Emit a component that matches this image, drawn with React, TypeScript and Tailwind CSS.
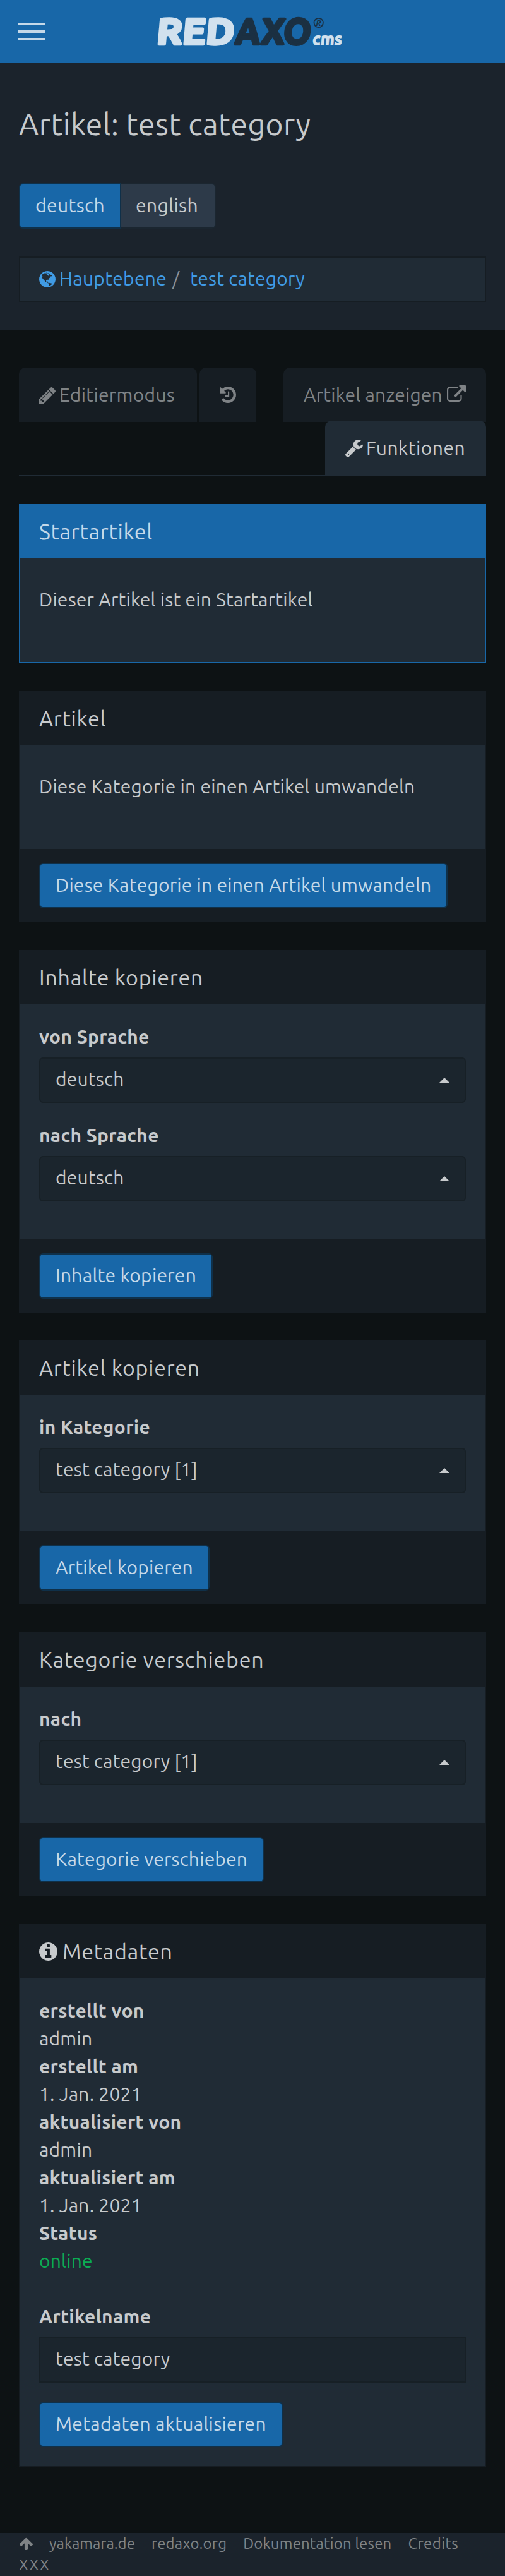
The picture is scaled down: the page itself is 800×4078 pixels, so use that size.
import React from "react";

function Icon({ d, box, className }: { d: string; box: string; className: string }) {
  return (
    <svg viewBox={box} className={className} fill="currentColor" preserveAspectRatio="none">
      <path d={d} />
    </svg>
  );
}

const GLOBE =
  "M896 128q209 0 385.5 103t279.5 279.5 103 385.5-103 385.5-279.5 279.5-385.5 103-385.5-103-279.5-279.5-103-385.5 103-385.5 279.5-279.5 385.5-103zm274 521q-2 1-9.5 9.5t-13.5 9.5q2 0 4.5-5t5-11 3.5-7q6-7 22-15 14-6 52-12 34-8 51 11-2-2 9.5-13t14.5-12q3-2 15-4.5t15-7.5l2-22q-12 1-17.5-7t-6.5-21q0 2-6 8 0-7-4.5-8t-11.5 1-9 1q-10-3-15-7.5t-8-16.5-4-15q-2-5-9.5-11t-9.5-10q-1-2-2.5-5.5t-3-6.5-4-5.5-5.5-2.5-7 5-7.5 10-4.5 5q-3-2-6-1.5t-4.5 1-4.5 3-5 3.5q-3 2-8.5 3t-8.5 2q15-5-1-11-10-4-16-3 9-4 7.5-12t-8.5-14h5q-1-4-8.5-8.5t-17.5-8.5-13-6q-8-5-34-9.5t-33-.5q-5 6-4.5 10.5t4 14 3.5 12.5q1 6-5.5 13t-6.5 12q0 7 14 15.5t10 21.5q-3 8-16 16t-16 12q-5 8-1.5 18.5t10.5 16.5q2 2 1.5 4t-3.5 4.5-5.5 4-6.5 3.5l-3 2q-11 5-20.5-6t-13.5-26q-7-25-16-30-23-8-29 1-5-13-41-26-25-9-58-4 6-1 0-15-7-15-19-12 3-6 4-17.5t1-13.5q3-13 12-23 1-1 7-8.5t9.5-13.5.5-6q35 4 50-11 5-5 11.5-17t10.5-17q9-6 14-5.5t14.5 5.5 14.5 5q14 1 15.5-11t-7.5-20q12 1 3-17-4-7-8-9-12-4-27 5-8 4 2 8-1-1-9.5 10.5t-16.5 17.5-16-5q-1-1-5.5-13.5t-9.5-13.5q-8 0-16 15 3-8-11-15t-24-8q19-12-8-27-7-4-20.5-5t-19.5 4q-5 7-5.5 11.5t5 8 10.5 5.5 11.5 4 8.5 3q14 10 8 14-2 1-8.5 3.5t-11.5 4.5-6 4q-3 4 0 14t-2 14q-5-5-9-17.5t-7-16.5q7 9-25 6l-10-1q-4 0-16 2t-20.5 1-13.5-8q-4-8 0-20 1-4 4-2-4-3-11-9.5t-10-8.5q-46 15-94 41 6 1 12-1 5-2 13-6.5t10-5.5q34-14 42-7l5-5q14 16 20 25-7-4-30-1-20 6-22 12 7 12 5 18-4-3-11.5-10t-14.5-11-15-5q-16 0-22 1-146 80-235 222 7 7 12 8 4 1 5 9t2.5 11 11.5-3q9 8 3 19 1-1 44 27 19 17 21 21 3 11-10 18-1-2-9-9t-9-4q-3 5 .5 18.5t10.5 12.5q-7 0-9.5 16t-2.5 35.5-1 23.5l2 1q-3 12 5.5 34.5t21.5 19.5q-13 3 20 43 6 8 8 9 3 2 12 7.5t15 10 10 10.5q4 5 10 22.5t14 23.5q-2 6 9.5 20t10.5 23q-1 0-2.5 1t-2.5 1q3 7 15.5 14t15.5 13q1 3 2 10t3 11 8 2q2-20-24-62-15-25-17-29-3-5-5.5-15.5t-4.5-14.5q2 0 6 1.5t8.5 3.5 7.5 4 2 3q-3 7 2 17.5t12 18.5 17 19 12 13q6 6 14 19.5t0 13.5q9 0 20 10.5t17 19.5q5 8 8 26t5 24q2 7 8.5 13.5t12.5 9.5l16 8 13 7q5 2 18.5 10.5t21.5 11.5q10 4 16 4t14.5-2.5 13.5-3.5q15-2 29 15t21 21q36 19 55 11-2 1 .5 7.5t8 15.5 9 14.5 5.5 8.5q5 6 18 15t18 15q6-4 7-9-3 8 7 20t18 10q14-3 14-32-31 15-49-18 0-1-2.5-5.5t-4-8.5-2.5-8.5 0-7.5 5-3q9 0 10-3.5t-2-12.5-4-13q-1-8-11-20t-12-15q-5 9-16 8t-16-9q0 1-1.5 5.5t-1.5 6.5q-13 0-15-1 1-3 2.5-17.5t3.5-22.5q1-4 5.5-12t7.5-14.5 4-12.5-4.5-9.5-17.5-2.5q-19 1-26 20-1 3-3 10.5t-5 11.5-9 7q-7 3-24 2t-24-5q-13-8-22.5-29t-9.5-37q0-10 2.5-26.5t3-25-5.5-24.5q3-2 9-9.5t10-10.5q2-1 4.5-1.5t4.5 0 4-1.5 3-6q-1-1-4-3-3-3-4-3 7 3 28.5-1.5t27.5 1.5q15 11 22-2 0-1-2.5-9.5t-.5-13.5q5 27 29 9 3 3 15.5 5t17.5 5q3 2 7 5.5t5.5 4.5 5-.5 8.5-6.5q10 14 12 24 11 40 19 44 7 3 11 2t4.5-9.5 0-14-1.5-12.5l-1-8v-18l-1-8q-15-3-18.5-12t1.5-18.5 15-18.5q1-1 8-3.5t15.5-6.5 12.5-8q21-19 15-35 7 0 11-9-1 0-5-3t-7.5-5-4.5-2q9-5 2-16 5-3 7.5-11t7.5-10q9 12 21 2 8-8 1-16 5-7 20.5-10.5t18.5-9.5q7 2 8-2t1-12 3-12q4-5 15-9t13-5l17-11q3-4 0-4 18 2 31-11 10-11-6-20 3-6-3-9.5t-15-5.5q3-1 11.5-.5t10.5-1.5q15-10-7-16-17-5-43 12zm-163 877q206-36 351-189-3-3-12.5-4.5t-12.5-3.5q-18-7-24-8 1-7-2.5-13t-8-9-12.5-8-11-7q-2-2-7-6t-7-5.5-7.5-4.5-8.5-2-10 1l-3 1q-3 1-5.5 2.5t-5.5 3-4 3 0 2.5q-21-17-36-22-5-1-11-5.5t-10.5-7-10-1.5-11.5 7q-5 5-6 15t-2 13q-7-5 0-17.5t2-18.5q-3-6-10.5-4.5t-12 4.5-11.5 8.5-9 6.5-8.5 5.5-8.5 7.5q-3 4-6 12t-5 11q-2-4-11.5-6.5t-9.5-5.5q2 10 4 35t5 38q7 31-12 48-27 25-29 40-4 22 12 26 0 7-8 20.5t-7 21.5q0 6 2 16z";
const PENCIL =
  "M491 1536l91-91-235-235-91 91v107h128v128h107zM1014 608q0-22-22-22-10 0-17 7l-542 542q-7 7-7 17 0 22 22 22 10 0 17-7l542-542q7-7 7-17zM960 416l416 416-832 832h-416v-416zM1643 512q0 53-37 90l-166 166-416-416 166-165q36-38 90-38 53 0 91 38l235 234q37 39 37 91z";
const HISTORY =
  "M1664 896q0 156-61 298t-164 245-245 164-298 61q-172 0-327-72.5t-264-204.5q-7-10-6.5-22.5t8.5-20.5l137-138q10-9 25-9 16 2 23 12 73 95 179 147t225 52q104 0 198.5-40.5t163.5-109.5 109.5-163.5 40.5-198.5-40.5-198.5-109.5-163.5-163.5-109.5-198.5-40.5q-98 0-188 35.5t-160 101.5l137 138q31 30 14 69-17 40-59 40h-448q-26 0-45-19t-19-45v-448q0-42 40-59 39-17 69 14l130 129q107-101 244.5-156.5t284.5-55.5q156 0 298 61t245 164 164 245 61 298zM1024 608v448q0 14-9 23t-23 9h-320q-14 0-23-9t-9-23v-64q0-14 9-23t23-9h224v-352q0-14 9-23t23-9h64q14 0 23 9t9 23z";
const EXTERNAL =
  "M1408 928v320q0 119-84.5 203.5t-203.5 84.5h-832q-119 0-203.5-84.5t-84.5-203.5v-832q0-119 84.5-203.5t203.5-84.5h704q14 0 23 9t9 23v64q0 14-9 23t-23 9h-704q-66 0-113 47t-47 113v832q0 66 47 113t113 47h832q66 0 113-47t47-113v-320q0-14 9-23t23-9h64q14 0 23 9t9 23zM1792 64v512q0 26-19 45t-45 19-45-19l-176-176-652 652q-10 10-23 10t-23-10l-114-114q-10-10-10-23t10-23l652-652-176-176q-19-19-19-45t19-45 45-19h512q26 0 45 19t19 45z";
const WRENCH =
  "M448 1472q0-26-19-45t-45-19-45 19-19 45 19 45 45 19 45-19 19-45zm644-420l-682 682q-37 37-90 37-52 0-91-37l-106-108q-38-36-38-90 0-53 38-91l681-681q39 98 114.5 173.5t173.5 114.5zm634-435q0 39-23 106-47 134-164.5 217.5t-258.5 83.5q-185 0-316.5-131.5t-131.5-316.5 131.5-316.5 316.5-131.5q58 0 121.5 16.5t107.5 46.5q16 11 16 28t-16 28l-293 169v224l193 107q5-3 79-48.5t135.5-81 70.5-35.5q15 0 23.5 10t8.5 25z";
const INFO =
  "M1152 1376v-160q0-14-9-23t-23-9h-96v-512q0-14-9-23t-23-9h-320q-14 0-23 9t-9 23v160q0 14 9 23t23 9h96v320h-96q-14 0-23 9t-9 23v160q0 14 9 23t23 9h448q14 0 23-9t9-23zM1024 480v-160q0-14-9-23t-23-9h-192q-14 0-23 9t-9 23v160q0 14 9 23t23 9h192q14 0 23-9t9-23zM1664 896q0 209-103 385.5t-279.5 279.5-385.5 103-385.5-103-279.5-279.5-103-385.5 103-385.5 279.5-279.5 385.5-103 385.5 103 279.5 279.5 103 385.5z";
const ARROW_UP =
  "M1675 971q0 51-37 90l-75 75q-38 38-91 38-54 0-90-38l-294-293v704q0 52-37.5 84.5t-90.5 32.5h-128q-53 0-90.5-32.5t-37.5-84.5v-704l-294 293q-36 38-90 38t-90-38l-75-75q-38-38-38-90 0-53 38-91l651-651q35-37 90-37 54 0 91 37l651 651q37 39 37 91z";

function Logo() {
  return (
    <svg viewBox="0 -20 310 100" className="h-[100px] w-[310px] overflow-visible">
      <g fontFamily="Ubuntu, 'Noto Sans', sans-serif" fontWeight="700" strokeLinejoin="round">
        <g transform="skewX(-5)" fontSize="57.7" strokeWidth="4.5">
          <text x="6.5" y="50" textLength="123" lengthAdjust="spacingAndGlyphs" fill="#d1e1ee" stroke="#d1e1ee">RED</text>
          <text x="131" y="50" textLength="120" lengthAdjust="spacingAndGlyphs" fill="#1b3042" stroke="#1b3042">AXO</text>
        </g>
        <text transform="skewX(-5)" x="254" y="51.5" fontSize="27" textLength="47" lengthAdjust="spacingAndGlyphs" fill="#d1e1ee" stroke="#d1e1ee" strokeWidth="1.2">cms</text>
        <circle cx="259.7" cy="16" r="7.2" fill="none" stroke="#1b3042" strokeWidth="1.8" />
        <text x="255.5" y="20.5" fontStyle="italic" fontSize="12.5" fill="#1b3042">R</text>
      </g>
    </svg>
  );
}

function Button({ children, className }: { children: React.ReactNode; className?: string }) {
  return (
    <button className={`h-[72px] rounded-[6px] border-2 border-[#0f3049] bg-[#1867a8] px-6 pb-0.5 leading-[42px] whitespace-nowrap text-[#c5d9e9] ${className ?? ""}`}>
      {children}
    </button>
  );
}

function Panel({ title, icon, children, footer }: { title: string; icon?: React.ReactNode; children: React.ReactNode; footer?: React.ReactNode }) {
  return (
    <section className="mt-11 border-2 border-[#161d23] bg-[#202b35]">
      <h2 className="flex h-[84px] bg-[#161d23] pt-[19px] pl-[30px] text-[34px] leading-[44px] tracking-[0.75px]">
        {icon}
        {title}
      </h2>
      <div className="px-[30px]">{children}</div>
      {footer && <div className="flex h-[114px] bg-[#161d23] pt-[22px] pl-[30px]">{footer}</div>}
    </section>
  );
}

function Field({ label, value }: { label: string; value: string }) {
  return (
    <div className="mb-7">
      <div className="h-[55px] font-bold tracking-[0.3px]">{label}</div>
      <div className="flex h-[72px] items-center justify-between rounded-[6px] border-2 border-[#172026] bg-[#1b252d] px-6 pb-1">
        {value}
        <svg viewBox="0 0 16 8" className="mt-1 h-2 w-4" fill="currentColor">
          <path d="M0 8L8 0l8 8z" />
        </svg>
      </div>
    </div>
  );
}

const META: [string, string][] = [
  ["erstellt von", "admin"],
  ["erstellt am", "1. Jan. 2021"],
  ["aktualisiert von", "admin"],
  ["aktualisiert am", "1. Jan. 2021"],
];

export default function App() {
  return (
    <div className="min-h-[4078px] bg-[#0d1214] font-['Ubuntu','Noto_Sans',sans-serif] text-[30px] leading-[44px] tracking-[0.2px] text-[#c7cacc]">
      <nav className="flex h-[100px] items-center bg-[#1867a8]">
        <div className="ml-7 flex w-11 flex-col gap-2 text-[#c5d9e9]">
          <span className="h-1 bg-current" />
          <span className="h-1 bg-current" />
          <span className="h-1 bg-current" />
        </div>
        <div className="ml-[173px]">
          <Logo />
        </div>
      </nav>

      <header className="h-[422px] bg-[#1b232c] px-[30px] pt-[66px]">
        <h1 className="text-[48px] leading-[60px] tracking-[0.5px]">Artikel: test category</h1>
        <div className="mt-16 flex h-[72px] tracking-[0.4px]">
          <div className="w-[162px] rounded-l-[6px] border-2 border-[#0f3049] bg-[#1867a8] pl-6 leading-[66px] text-[#c5d9e9]">deutsch</div>
          <div className="w-[150px] rounded-r-[6px] border-y-2 border-r-2 border-[#1b2630] bg-[#2d3a49] pl-[23px] leading-[66px]">english</div>
        </div>
        <div className="mt-11 flex h-[72px] items-center border-2 border-[#161d23] bg-[#202b35] pb-0.5 pl-[30px] text-[#409be4]">
          <Icon d={GLOBE} box="128 128 1536 1536" className="mt-0.5 size-[26px]" />
          <span className="ml-[6px] tracking-[0.3px]">Hauptebene</span>
          <span className="ml-[9px] text-[#8b9095]">/</span>
          <span className="ml-[17px]">test category</span>
        </div>
      </header>

      <main className="px-[30px]">
        <div className="mt-[60px] flex text-[#7f8386]">
          <div className="flex h-[86px] w-[282px] items-center rounded-t-[10px] bg-[#161d23] pl-8 tracking-[0.3px]">
            <Icon d={PENCIL} box="128 149 1515 1515" className="mt-px mr-[6px] size-[26px]" />
            Editiermodus
          </div>
          <div className="ml-1 flex h-[86px] w-[90px] items-center justify-center rounded-t-[10px] bg-[#161d23]">
            <Icon d={HISTORY} box="128 128 1536 1536" className="size-[26px]" />
          </div>
          <div className="ml-auto flex h-[86px] w-[321px] items-center rounded-t-[10px] bg-[#161d23] pl-8">
            Artikel anzeigen
            <Icon d={EXTERNAL} box="0 0 1792 1536" className="mb-1 ml-[7px] h-[26px] w-[30px]" />
          </div>
        </div>
        <div className="-mt-0.5 flex h-[88px] justify-end border-b-2 border-[#202b35]">
          <div className="flex w-[255px] items-center rounded-t-[10px] bg-[#202b35] pb-px pl-8 tracking-[0.5px]">
            <Icon d={WRENCH} box="84 128 1642 1643" className="mt-[3px] mr-[5px] size-7" />
            Funktionen
          </div>
        </div>

        <section className="mt-11 h-[252px] border-2 border-[#1867a8] bg-[#202b35]">
          <h2 className="h-[84px] bg-[#1867a8] pt-[19px] pl-[30px] text-[34px] leading-[44px] tracking-[0.75px] text-[#c5d9e9]">Startartikel</h2>
          <p className="pt-[43px] pl-[30px]">Dieser Artikel ist ein Startartikel</p>
        </section>

        <Panel title="Artikel" footer={<Button>Diese Kategorie in einen Artikel umwandeln</Button>}>
          <p className="h-[164px] pt-[43px]">Diese Kategorie in einen Artikel umwandeln</p>
        </Panel>
        <Panel title="Inhalte kopieren" footer={<Button className="tracking-[0.26px]">Inhalte kopieren</Button>}>
          <div className="h-[372px] pt-[29px]">
            <Field label="von Sprache" value="deutsch" />
            <div className="h-px" />
            <Field label="nach Sprache" value="deutsch" />
          </div>
        </Panel>
        <Panel title="Artikel kopieren" footer={<Button className="tracking-[0.22px]">Artikel kopieren</Button>}>
          <div className="h-[216px] pt-[29px]">
            <Field label="in Kategorie" value="test category [1]" />
          </div>
        </Panel>
        <Panel title="Kategorie verschieben" footer={<Button className="tracking-[0.17px]">Kategorie verschieben</Button>}>
          <div className="h-[216px] pt-[29px]">
            <Field label="nach" value="test category [1]" />
          </div>
        </Panel>
        <Panel title="Metadaten" icon={<Icon d={INFO} box="128 128 1536 1536" className="mt-2 mr-2 size-[29px]" />}>
          <dl className="pt-[29px]">
            {META.map(([k, v]) => (
              <React.Fragment key={k}>
                <dt className="font-bold tracking-[0.3px]">{k}</dt>
                <dd>{v}</dd>
              </React.Fragment>
            ))}
            <dt className="font-bold tracking-[0.3px]">Status</dt>
            <dd className="text-[#0cab53]">online</dd>
          </dl>
          <div className="mt-11 font-bold tracking-[0.3px]">Artikelname</div>
          <div className="mt-[11px] h-[72px] border-2 border-[#172026] bg-[#1b252d] pl-6 leading-[65px]">test category</div>
          <div className="mt-[30px] mb-[30px] flex">
            <Button className="tracking-[0.3px]">Metadaten aktualisieren</Button>
          </div>
        </Panel>
      </main>

      <footer className="mt-[104px] h-[68px] bg-[#1b232c] px-[30px] text-[24px] leading-[34px] text-[#7f8386]">
        <div className="flex items-center">
          <Icon d={ARROW_UP} box="117 139 1558 1524" className="ml-px h-5 w-[21px]" />
          <span className="ml-[26px] tracking-normal">yakamara.de</span>
          <span className="ml-[26px]">redaxo.org</span>
          <span className="ml-[26px]">Dokumentation lesen</span>
          <span className="ml-[26px] tracking-[0.4px]">Credits</span>
        </div>
        <div className="tracking-[1.2px]">XXX</div>
      </footer>
    </div>
  );
}
